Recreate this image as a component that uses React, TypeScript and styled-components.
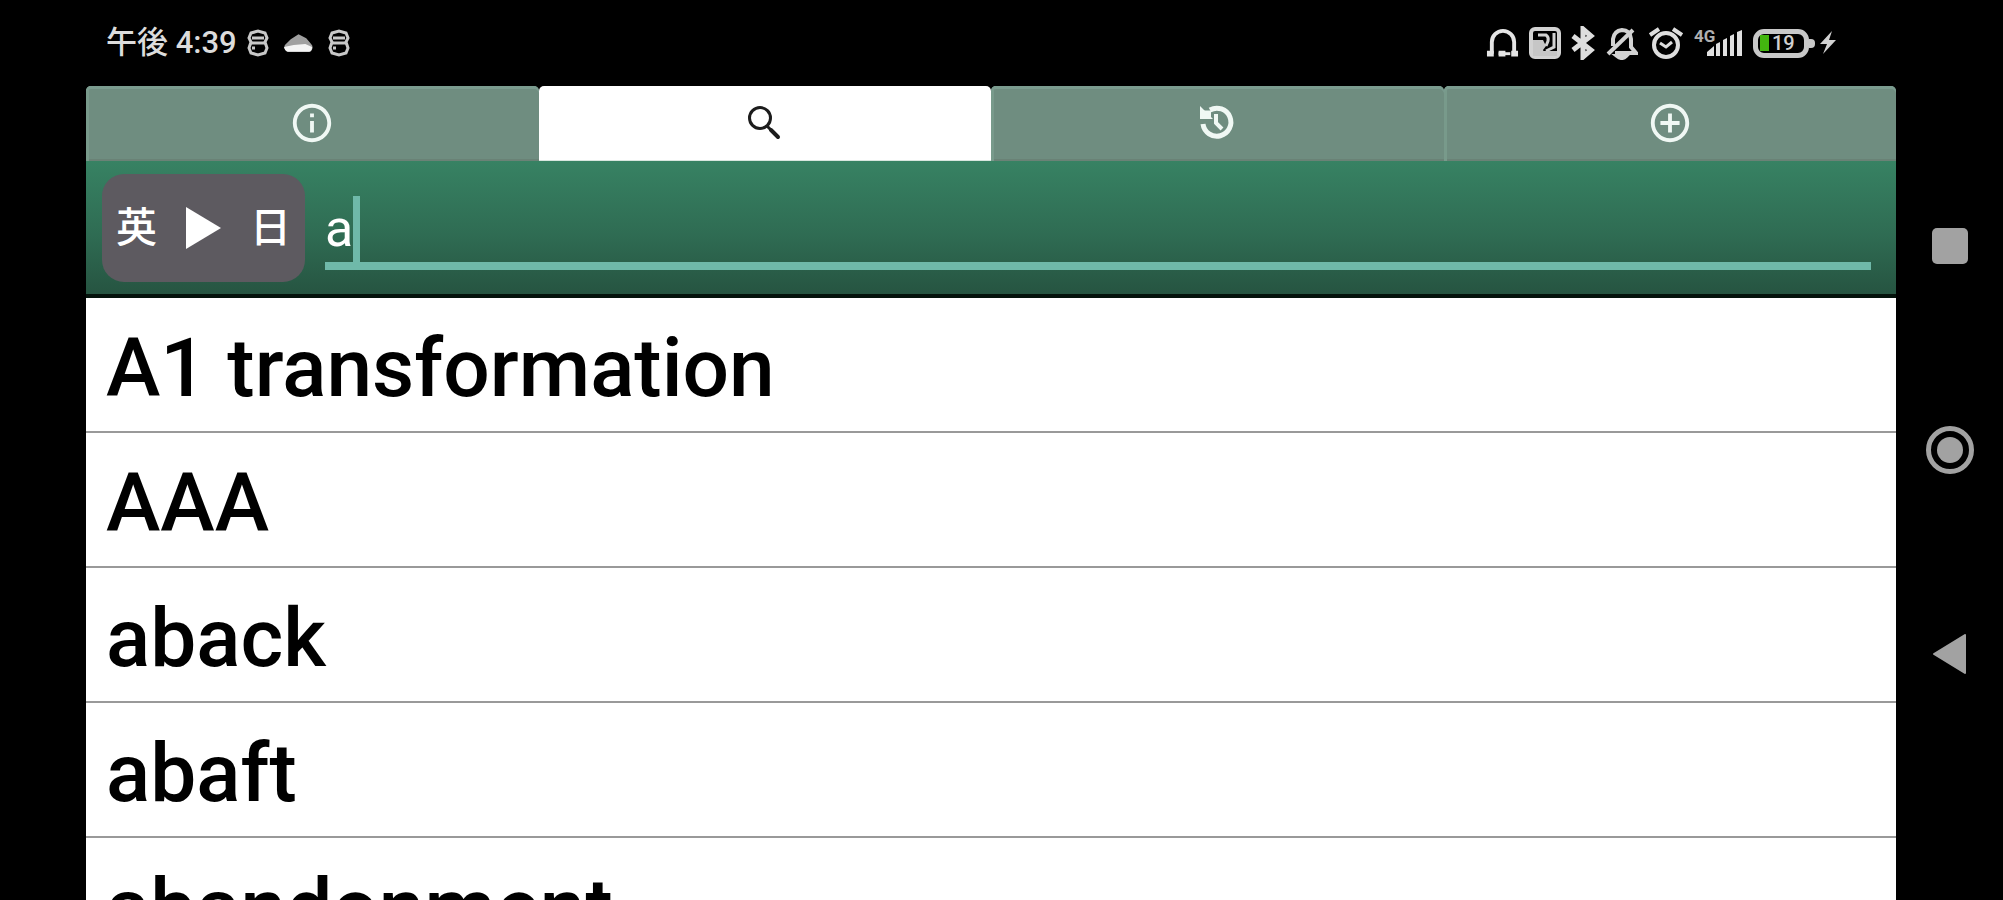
import React, { useState } from "react";
import styled, { createGlobalStyle } from "styled-components";
import { MdAddCircleOutline, MdInfoOutline } from "react-icons/md";

const GlobalStyle = createGlobalStyle`
  * { box-sizing: border-box; }
  html, body, #root { height: 100%; }
  body {
    margin: 0;
    overflow: hidden;
    background: #000;
    font-family: Roboto, "Noto Sans CJK JP", sans-serif;
  }
  button { font: inherit; border: 0; padding: 0; cursor: pointer; }
`;

const Screen = styled.div`
  display: flex;
  height: 100vh;
  overflow: hidden;
  background: #000;
`;

const Main = styled.div`
  flex: 1;
  min-width: 0;
  display: flex;
  flex-direction: column;
  margin-left: 86px;
`;

const StatusBar = styled.header`
  flex: none;
  display: flex;
  justify-content: space-between;
  align-items: center;
  height: 86px;
  padding: 0 59px 0 20px;
  color: #dcdcdc;
`;

const StatusGroup = styled.div<{ $gap: number }>`
  display: flex;
  align-items: center;
  gap: ${(p) => p.$gap}px;
  svg { display: block; flex: none; }
`;

const Clock = styled.time`
  font-size: 31px;
  font-weight: 500;
  line-height: 40px;
  white-space: nowrap;
`;

const Tabs = styled.nav`
  flex: none;
  display: grid;
  grid-template-columns: repeat(4, 1fr);
  height: 75px;
`;

const Tab = styled.button<{ $active: boolean }>`
  display: flex;
  align-items: center;
  justify-content: center;
  padding-bottom: 2px;
  color: ${(p) => (p.$active ? "#1c1c1c" : "#f0f8f4")};
  background: ${(p) => (p.$active ? "#fff" : "#6f8d80")};
  border-radius: 5px 5px 0 0;
  box-shadow: ${(p) =>
    p.$active
      ? "inset 0 -1px #d8e6df"
      : "inset 0 3px #7b9c8f, inset 3px 0 #789a8b, inset 0 -2px #6a8276"};
`;

const SearchBar = styled.form`
  flex: none;
  display: flex;
  align-items: flex-start;
  gap: 20px;
  height: 137px;
  padding: 13px 25px 0 16px;
  background: linear-gradient(#378263, #2f6c53 55%, #265441);
  border-bottom: 4px solid #04120b;
`;

const LanguageButton = styled.button`
  flex: none;
  display: flex;
  align-items: center;
  justify-content: space-between;
  width: 203px;
  height: 108px;
  padding: 0 14px;
  border-radius: 22px;
  background: #5d5a60;
  color: #fff;
`;

const Language = styled.span`
  font-size: 41px;
  line-height: 48px;
  font-weight: 500;
`;

const Field = styled.label`
  flex: 1;
  min-width: 0;
  display: flex;
  align-items: flex-end;
  height: 96px;
  border-bottom: 8px solid #6fb9a9;
  cursor: text;
`;

const QueryInput = styled.input`
  field-sizing: content;
  min-width: 0;
  max-width: 100%;
  height: 66px;
  padding: 0;
  border: 0;
  outline: 0;
  background: transparent;
  color: #fff;
  caret-color: transparent;
  font: 400 52px/66px Roboto, "Noto Sans CJK JP", sans-serif;
`;

const Caret = styled.span`
  flex: none;
  width: 7px;
  height: 66px;
  background: #6fb9a9;
`;

const Results = styled.ul`
  flex: 1;
  min-height: 0;
  overflow: hidden;
  margin: 0;
  padding: 0;
  list-style: none;
  background: #fff;
`;

const Result = styled.li`
  height: 135px;
  border-bottom: 2px solid #999;
`;

const ResultLink = styled.a`
  display: block;
  padding: 23px 20px 16px;
  color: #000;
  font-size: 82px;
  font-weight: 500;
  line-height: 94px;
  text-decoration: none;
  white-space: nowrap;
`;

const NavBar = styled.nav`
  flex: none;
  display: flex;
  flex-direction: column;
  align-items: center;
  justify-content: center;
  gap: 144px;
  width: 107px;
`;

const NavButton = styled.button`
  display: flex;
  align-items: center;
  justify-content: center;
  width: 60px;
  height: 60px;
  background: transparent;
  color: #a2a2a2;
`;

const AppBadgeIcon = () => (
  <svg width="22" height="28" viewBox="0 0 22 28" fill="none" stroke="#c8c8c8" strokeWidth="3" aria-hidden="true">
    <path d="M4 4 11 2l7 2 2 5-2 4 2 6-2 5-7 2-7-2-2-5 2-6-2-4z" />
    <path d="M5 9h12M4 14h14M5 19h3" strokeWidth="3" />
  </svg>
);

const CloudIcon = () => (
  <svg width="31" height="20" viewBox="0 0 32 20" aria-hidden="true">
    <path d="M5 19a5 5 0 0 1-3-7l6-6 8-5 8 4 5 6a5 5 0 0 1-1 8z" fill="#a0a0a0" />
    <path d="M5 19q-3-1-4-5l10-2 12-1 7 3q0 4-3 5z" fill="#f4f4f4" />
  </svg>
);

const HeadphonesIcon = () => (
  <svg width="33" height="34" viewBox="0 0 34 34" fill="none" stroke="#e4e4e4" strokeWidth="4" aria-hidden="true">
    <path d="M6 28V16a11 11 0 0 1 23 0v12" />
    <path d="M1 28h7M13 28h7M26 28h7" strokeWidth="6" />
    <path d="M13 28h12" strokeWidth="3" />
  </svg>
);

const NfcIcon = () => (
  <svg width="32" height="32" viewBox="0 0 32 32" fill="none" aria-hidden="true">
    <rect x="2" y="2" width="28" height="28" rx="4" stroke="#d2d2d2" strokeWidth="4" />
    <path d="M4 13h10l3 6-3 4 3 6H4z" fill="#c6c6c6" />
    <path d="M9 8h8q3 2 2 6l-2 5M25 6v14l-8 4" stroke="#d2d2d2" strokeWidth="3" />
    <path d="M4 24h24v5H4z" fill="#c6c6c6" />
  </svg>
);

const BluetoothIcon = () => (
  <svg width="25" height="34" viewBox="0 0 25 34" fill="none" stroke="#dedede" strokeWidth="5" aria-hidden="true">
    <path d="m2 10 18 14-8 7V3l8 7L2 24" />
  </svg>
);

const BellOffIcon = () => (
  <svg width="32" height="34" viewBox="0 0 32 34" fill="none" stroke="#d2d2d2" strokeWidth="4" aria-hidden="true">
    <path d="M7 20v-7q1-8 9-9 8 0 9 9v8l5 6H9" />
    <path d="M2 28 27 4" />
    <path d="M11 30q5 4 9 0z" fill="#d2d2d2" />
  </svg>
);

const AlarmIcon = () => (
  <svg width="36" height="34" viewBox="0 0 36 34" fill="none" stroke="#dedede" strokeWidth="4" aria-hidden="true">
    <circle cx="18" cy="19" r="12" />
    <path d="m2 9 9-6M34 9l-9-6" />
    <path d="m12 17 6 4 6-5" strokeWidth="3" />
  </svg>
);

const SignalWrap = styled.span`
  display: grid;
  grid-template-columns: 13px 36px;
  align-items: end;
`;

const NetworkType = styled.span`
  align-self: start;
  font-size: 17px;
  font-weight: 700;
  line-height: 15px;
  color: #b0b0b0;
`;

const SignalBars = () => (
  <svg width="36" height="28" viewBox="0 0 36 28" fill="#e0e0e0" aria-hidden="true">
    <path d="M0 27v-4l7-6v10zM9 27V15l4-2v14zM16 27V11l4-2v18zM23 27V7l4-2v22zM30 27V3l5-2v26z" />
  </svg>
);

const Battery = styled.span`
  display: flex;
  align-items: center;
  color: #d0d0d0;
`;

const BatteryBody = styled.span`
  display: flex;
  align-items: center;
  gap: 3px;
  width: 56px;
  height: 29px;
  padding-left: 2px;
  border: 5px solid #c8c8c8;
  border-radius: 11px;
  font-size: 20px;
  font-weight: 500;
  line-height: 20px;
`;

const BatteryLevel = styled.span`
  width: 9px;
  height: 16px;
  background: #43b50f;
`;

const BatteryTip = styled.span`
  width: 6px;
  height: 9px;
  margin-right: 4px;
  border-radius: 0 4px 4px 0;
  background: #c8c8c8;
`;

const BoltIcon = () => (
  <svg width="18" height="24" viewBox="0 0 18 24" fill="#d2d2d2" aria-hidden="true">
    <path d="M13 0 1 13h7L4 23l13-14h-7z" />
  </svg>
);

const SearchIcon = () => (
  <svg width="36" height="36" viewBox="0 0 36 36" fill="none" stroke="currentColor" aria-hidden="true">
    <circle cx="13" cy="13" r="10.500" strokeWidth="3" />
    <path d="m20 21 4 4" strokeWidth="3" />
    <path d="m24 25 7 7" strokeWidth="4" strokeLinecap="round" />
  </svg>
);

const HistoryIcon = () => (
  <svg width="38" height="38" viewBox="0 0 38 38" fill="none" stroke="currentColor" aria-hidden="true">
    <path d="M12 6a14 14 0 1 1-7 14" strokeWidth="5" />
    <path d="M2 2v13h13z" fill="currentColor" stroke="none" />
    <path d="M5 10h8" strokeWidth="7" />
    <path d="M18 10v9l6 6" strokeWidth="4" />
  </svg>
);

const tabs = [
  { label: "情報", icon: <MdInfoOutline size={46} /> },
  { label: "検索", icon: <SearchIcon /> },
  { label: "履歴", icon: <HistoryIcon /> },
  { label: "追加", icon: <MdAddCircleOutline size={46} /> },
];

const words = ["A1 transformation", "AAA", "aback", "abaft", "abandonment"];

export default function App() {
  const [active, setActive] = useState(1);
  const [query, setQuery] = useState("a");

  return (
    <>
      <GlobalStyle />
      <Screen>
        <Main>
          <StatusBar>
            <StatusGroup $gap={10}>
              <Clock>午後 4:39</Clock>
              <StatusGroup $gap={14}>
                <AppBadgeIcon />
                <CloudIcon />
                <AppBadgeIcon />
              </StatusGroup>
            </StatusGroup>
            <StatusGroup $gap={10}>
              <HeadphonesIcon />
              <NfcIcon />
              <BluetoothIcon />
              <BellOffIcon />
              <AlarmIcon />
              <SignalWrap>
                <NetworkType>4G</NetworkType>
                <SignalBars />
              </SignalWrap>
              <Battery>
                <BatteryBody>
                  <BatteryLevel />
                  19
                </BatteryBody>
                <BatteryTip />
                <BoltIcon />
              </Battery>
            </StatusGroup>
          </StatusBar>

          <Tabs>
            {tabs.map((tab, i) => (
              <Tab
                key={tab.label}
                type="button"
                aria-label={tab.label}
                aria-pressed={i === active}
                $active={i === active}
                onClick={() => setActive(i)}
              >
                {tab.icon}
              </Tab>
            ))}
          </Tabs>

          <SearchBar onSubmit={(e) => e.preventDefault()}>
            <LanguageButton type="button">
              <Language>英</Language>
              <svg width="37" height="42" viewBox="0 0 37 42" aria-hidden="true">
                <path d="M1 0 36 21 1 42z" fill="#fff" />
              </svg>
              <Language>日</Language>
            </LanguageButton>
            <Field>
              <QueryInput
                type="text"
                aria-label="検索語"
                value={query}
                onChange={(e) => setQuery(e.target.value)}
              />
              <Caret />
            </Field>
          </SearchBar>

          <Results>
            {words.map((word) => (
              <Result key={word}>
                <ResultLink href="#">{word}</ResultLink>
              </Result>
            ))}
          </Results>
        </Main>

        <NavBar>
          <NavButton type="button" aria-label="最近使ったアプリ">
            <svg width="38" height="36" viewBox="0 0 38 36">
              <rect x="1" y="0" width="36" height="36" rx="5" fill="currentColor" />
            </svg>
          </NavButton>
          <NavButton type="button" aria-label="ホーム">
            <svg width="48" height="48" viewBox="0 0 48 48">
              <circle cx="24" cy="24" r="21.500" fill="none" stroke="currentColor" strokeWidth="5" />
              <circle cx="24" cy="24" r="13" fill="currentColor" />
            </svg>
          </NavButton>
          <NavButton type="button" aria-label="戻る">
            <svg width="34" height="40" viewBox="0 0 34 40">
              <path d="M1 20 32 1v38z" fill="currentColor" stroke="currentColor" strokeWidth="2" strokeLinejoin="round" />
            </svg>
          </NavButton>
        </NavBar>
      </Screen>
    </>
  );
}
